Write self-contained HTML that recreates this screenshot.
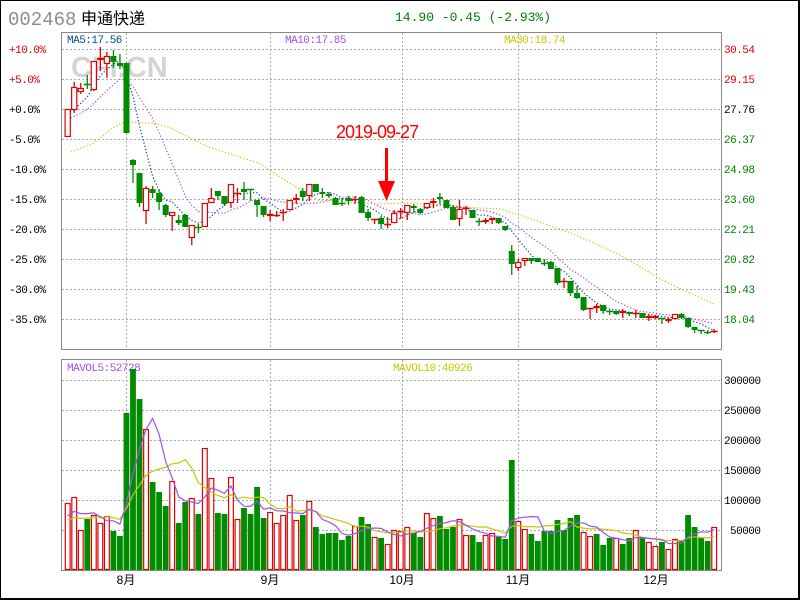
<!DOCTYPE html>
<html><head><meta charset="utf-8"><style>
html,body{margin:0;padding:0;background:#fff;}
#w{position:relative;width:800px;height:600px;box-sizing:border-box;border:1px solid #000;border-right:2px solid #000;border-bottom:2px solid #000;overflow:hidden;}
svg{position:absolute;left:0;top:0;}
text{font-family:"Liberation Mono",monospace;}
</style></head><body><div id="w">
<svg id="s" width="800" height="600" xmlns="http://www.w3.org/2000/svg">
<text x="7" y="24" font-size="19" fill="#8c8c8c" style="font-family:'Liberation Mono',monospace">002468</text>
<text x="80" y="23" font-size="16" fill="#000" style="font-family:'Liberation Sans','Noto Sans CJK SC',sans-serif">申通快递</text>
<text x="394" y="20" font-size="13" fill="#008000">14.90 -0.45 (-2.93%)</text>
<g stroke="#aaa" stroke-dasharray="2 2" stroke-width="1" id="grid"></g>
<text x="70" y="76" font-size="29" font-weight="bold" fill="#d4d4d4" style="font-family:'Liberation Sans',sans-serif">CFi.CN</text>
<rect x="60.5" y="31.5" width="660" height="317" fill="none" stroke="#888"/>
<rect x="60.5" y="358.5" width="660" height="211" fill="none" stroke="#888"/>
<g font-size="11" letter-spacing="-0.5">
<text x="66" y="42" fill="#004c99">MA5:17.56</text>
<text x="284" y="42" fill="#a050f0">MA10:17.85</text>
<text x="503" y="42" fill="#c8c800">MA30:18.74</text>
<text x="66" y="370" fill="#a050f0">MAVOL5:52728</text>
<text x="392" y="370" fill="#c8c800">MAVOL10:40926</text>
</g>
<g font-size="11" letter-spacing="-0.5" id="lab"></g>
<g id="plot"></g>
<text x="335" y="137" font-size="18" fill="#f00" letter-spacing="-1" style="font-family:'Liberation Sans',sans-serif">2019-09-27</text>
<rect x="384" y="147" width="3" height="36" fill="#f00"/>
<polygon points="377,180 394,180 385.5,200" fill="#f00"/>
</svg></div>
<script>
var NS="http://www.w3.org/2000/svg",s=document.getElementById('s');
function el(p,t,a){var e=document.createElementNS(NS,t);for(var k in a)e.setAttribute(k,a[k]);p.appendChild(e);return e;}
var grid=document.getElementById('grid'),lab=document.getElementById('lab'),plot=document.getElementById('plot');
for(var y=48;y<=318;y+=30)el(grid,'line',{x1:61,x2:720,y1:y+.5,y2:y+.5});
for(var y=379;y<=529;y+=30)el(grid,'line',{x1:61,x2:720,y1:y+.5,y2:y+.5});
[125,269,401,517,655].forEach(function(x){el(grid,'line',{x1:x+.5,x2:x+.5,y1:32,y2:348});el(grid,'line',{x1:x+.5,x2:x+.5,y1:359,y2:569});});
var L=['+10.0%','+5.0%','+0.0%','-5.0%','-10.0%','-15.0%','-20.0%','-25.0%','-30.0%','-35.0%'];
var R=['30.54','29.15','27.76','26.37','24.98','23.60','22.21','20.82','19.43','18.04'];
for(var i=0;i<10;i++){var y=48+30*i+4;
var c=i<2?'#d00':'#000';var t=el(lab,'text',{x:8,y:y,fill:c});t.textContent=L[i];
var c2=i<2?'#d00':(i==2?'#000':'#008000');t=el(lab,'text',{x:723,y:y,fill:c2});t.textContent=R[i];}
['300000','250000','200000','150000','100000','50000'].forEach(function(v,i){var t=el(lab,'text',{x:i==5?729:723,y:379+30*i+4,fill:'#000'});t.textContent=v;});
[['8月',125],['9月',269],['10月',401],['11月',517],['12月',655]].forEach(function(m){var t=el(lab,'text',{x:m[1],y:583,fill:'#000','text-anchor':'middle',style:"font-family:'Liberation Sans','Noto Sans CJK SC',sans-serif",'font-size':'12','letter-spacing':'0'});t.textContent=m[0];});
var C=[[108,136,108,136,1],[86,109,81,112,1],[87,91,82,93,1],[83,83,74,88,0],[60,89,60,90,1],[57,59,46,70,1],[55,63,51,77,1],[55,61,49,67,0],[62,65,53,68,0],[62,132,62,132,0],
[159,164,158,182,0],[172,202,172,206,0],[187,210,185,223,1],[188,192,185,197,0],[192,201,188,209,0],[204,214,203,216,0],[211,215,211,230,1],[219,222,214,224,0],[214,226,213,226,0],[224,237,224,244,1],
[226,227,223,232,0],[202,226,202,226,1],[197,202,187,202,1],[190,195,190,199,0],[195,203,195,205,0],[183,202,183,207,1],[192,192,187,202,1],[188,191,181,199,0],[188,189,188,200,0],[199,204,199,216,0],
[205,214,205,216,0],[213,215,209,220,1],[214,214,210,216,1],[211,212,208,220,1],[199,209,199,209,1],[197,199,193,203,1],[190,196,187,200,0],[183,195,183,200,1],[183,191,183,191,0],[191,193,187,197,0],
[193,195,191,197,0],[197,204,196,204,0],[202,202,197,205,0],[197,200,195,204,0],[198,199,195,203,1],[196,212,195,212,0],[211,217,208,220,0],[218,218,218,223,1],[217,223,215,228,0],[223,223,216,227,1],
[212,222,209,222,1],[210,210,207,218,1],[204,212,204,219,1],[205,207,203,212,0],[208,212,207,213,0],[202,207,202,208,1],[200,202,197,207,1],[196,198,192,203,0],[199,207,199,207,0],[206,219,204,219,0],
[208,218,199,225,1],[207,207,205,214,1],[209,217,209,217,0],[220,220,217,225,0],[219,221,217,223,1],[217,219,217,223,1],[217,222,217,223,0],[225,229,225,230,0],[250,263,244,274,0],[261,267,258,270,1],
[257,260,257,265,1],[257,260,257,263,0],[257,261,257,261,0],[262,262,258,265,0],[261,268,260,268,0],[267,282,267,284,0],[280,280,277,287,1],[280,292,280,295,0],[292,297,285,298,0],[296,309,296,310,0],
[307,308,307,318,1],[305,307,303,312,1],[304,310,304,313,0],[310,310,309,314,0],[310,313,310,314,0],[310,312,308,317,1],[311,313,311,315,0],[312,312,309,317,1],[312,317,312,317,0],[315,317,313,320,1],
[315,317,314,318,1],[317,318,317,323,0],[318,320,316,322,1],[313,318,313,318,1],[313,317,312,318,0],[317,326,317,327,0],[326,329,326,332,0],[329,330,329,333,0],[331,331,329,333,0],[330,330,328,332,1]];
var VT=[502,496,529,518,514,522,515,530,535,412,368,398,428,481,491,505,480,522,501,497,513,447,477,512,513,476,518,507,513,486,517,511,522,514,494,519,514,500,526,533,532,532,539,535,525,516,523,536,537,543,529,530,
526,532,536,512,517,515,528,526,518,534,534,541,534,532,536,538,459,520,528,533,540,530,530,519,529,517,514,531,535,533,544,537,537,543,537,529,537,541,545,541,548,538,539,514,526,537,540,526];
var VC="rrrgrrrgggggrgggrggrgrrggrrggggrrrrrgrggggggrggrgrrr"+"rggrrgggrr"+"ggrrgggrrg"+"gggggggrrg"+"ggrggrgrrg"+"rrgggggr";
function X(i){return 66.7+6.53*i;}
var RED='#e00000',GRN='#008c00';
// MA30 manual
var ma30=[[70,151],[93,142],[110,128],[123,121],[153,122],[170,127],[193,139],[210,147],[233,154],[260,163],[273,172],[290,183],[297,187],[317,199],[373,203],[407,202],[440,204],[477,207],[500,208],[533,219],[567,231],[593,242],[617,253],[640,266],[657,277],[680,288],[713,303]];
el(plot,'polyline',{points:ma30.join(' '),fill:'none',stroke:'#c8c800','stroke-width':1.2,'stroke-dasharray':'1.3 2'});
function ma(arr,n,pad){var out=[];for(var i=0;i<arr.length;i++){var s=0;for(var k=i-n+1;k<=i;k++)s+=k<0?pad:arr[k];out.push(s/n);}return out;}
var cl=C.map(function(c){return c[4]?c[0]:c[1];});
function pl(a,col,dash){var p=a.map(function(v,i){return X(i).toFixed(1)+','+v.toFixed(1);}).join(' ');var o={points:p,fill:'none',stroke:col,'stroke-width':1.2};if(dash)o['stroke-dasharray']=dash;el(plot,'polyline',o);}
pl(ma(cl,10,120),'#a050f0','1.3 2');
pl(ma(cl,5,115),'#0a4c99','1.3 2');
C.forEach(function(c,i){var x=X(i),col=c[4]?RED:GRN;
 el(plot,'line',{x1:x,x2:x,y1:c[2],y2:c[3],stroke:col,'stroke-width':1.3});
 if(c[1]-c[0]<1.5){el(plot,'line',{x1:x-3.5,x2:x+3.5,y1:c[0]+.5,y2:c[0]+.5,stroke:col,'stroke-width':1.5});}
 else if(c[4]){el(plot,'rect',{x:x-2.6,y:c[0]+.5,width:5.2,height:c[1]-c[0]-1,fill:'#fff',stroke:col,'stroke-width':1.2});}
 else el(plot,'rect',{x:x-3,y:c[0],width:6,height:c[1]-c[0],fill:col});
});
VT.forEach(function(t,i){var x=X(i),r=VC[i]=='r';
 if(r)el(plot,'rect',{x:x-2.4,y:t+.5,width:4.8,height:569-t-1,fill:'#fff',stroke:RED,'stroke-width':1.2});
 else el(plot,'rect',{x:x-2.9,y:t,width:5.8,height:569-t,fill:GRN});});
pl(ma(VT,10,521),'#c8c800');
pl(ma(VT,5,518),'#a050f0');
</script></body></html>
